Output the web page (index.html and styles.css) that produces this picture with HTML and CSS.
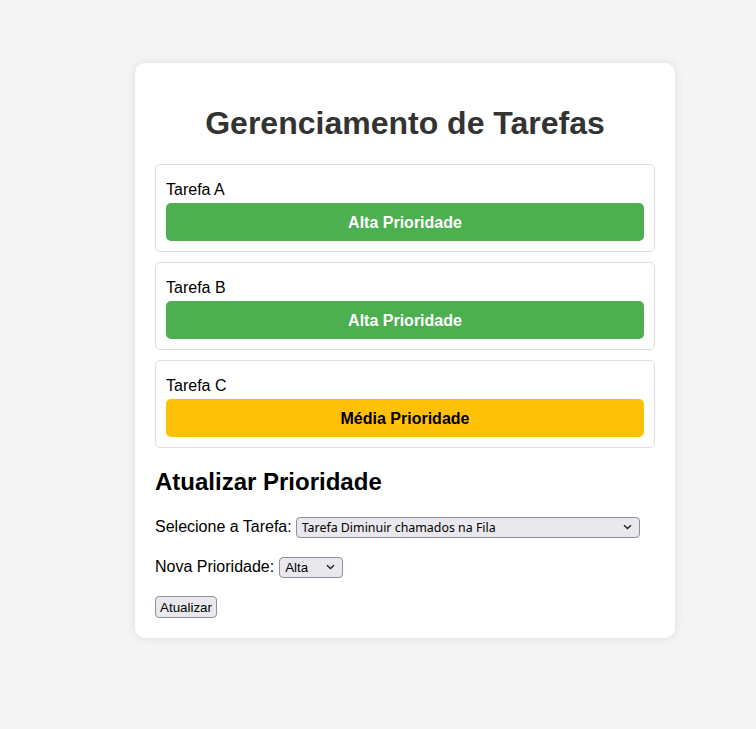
FILE: index.html
```html
<!DOCTYPE html>
<html lang="pt">
<head>
<meta charset="utf-8">
<title>Gerenciamento de Tarefas</title>
<link rel="stylesheet" href="styles.css">
</head>
<body>
<div class="container">
  <h1 class="title">Gerenciamento de Tarefas</h1>
  <div class="task">
    <div class="task-name">Tarefa A</div>
    <div class="priority high">Alta Prioridade</div>
  </div>
  <div class="task">
    <div class="task-name">Tarefa B</div>
    <div class="priority high">Alta Prioridade</div>
  </div>
  <div class="task">
    <div class="task-name">Tarefa C</div>
    <div class="priority medium">Média Prioridade</div>
  </div>
  <h2 class="subtitle">Atualizar Prioridade</h2>
  <div class="row">
    <label for="task-select">Selecione a Tarefa:</label>
    <span class="select-wrap">
      <select id="task-select" class="control select select-task">
        <option>Tarefa Diminuir chamados na Fila</option>
      </select>
      <svg class="chevron" width="9" height="6" viewBox="0 0 9 6"><path d="M1 1.2 L4.5 4.6 L8 1.2" fill="none" stroke="#222" stroke-width="1.4"/></svg>
    </span>
  </div>
  <div class="row row-gap">
    <label for="prio-select">Nova Prioridade:</label>
    <span class="select-wrap">
      <select id="prio-select" class="control select select-prio">
        <option>Alta</option>
        <option>Média</option>
        <option>Baixa</option>
      </select>
      <svg class="chevron" width="9" height="6" viewBox="0 0 9 6"><path d="M1 1.2 L4.5 4.6 L8 1.2" fill="none" stroke="#222" stroke-width="1.4"/></svg>
    </span>
  </div>
  <button class="control btn">Atualizar</button>
</div>
</body>
</html>
```
FILE: styles.css
```css
html, body {
  margin: 0;
  padding: 0;
}
body {
  background: #f4f4f4;
  font-family: "Liberation Sans", Arial, sans-serif;
  font-size: 16px;
  color: #000;
  min-height: 729px;
}
.container {
  width: 500px;
  margin: 63px 0 0 135px;
  padding: 20px;
  background: #fff;
  border-radius: 10px;
  box-shadow: 0 0 10px rgba(0, 0, 0, 0.1);
}
.title {
  margin: 22px 0 22px;
  text-align: center;
  font-size: 32px;
  line-height: 37px;
  font-weight: bold;
  color: #333;
}
.task {
  border: 1px solid #ddd;
  border-radius: 5px;
  padding: 10px;
  margin-bottom: 10px;
}
.task-name {
  line-height: 18px;
  margin: 5px 0;
  padding-top: 1px;
  height: 17px;
}
.priority {
  border-radius: 5px;
  padding: 11px 10px 9px;
  line-height: 18px;
  text-align: center;
  font-weight: bold;
}
.high {
  background: #4caf50;
  color: #fff;
}
.medium {
  background: #ffc107;
  color: #000;
}
.subtitle {
  margin: 20px 0;
  font-size: 24px;
  line-height: 28px;
  font-weight: bold;
}
.row {
  display: flex;
  align-items: center;
  gap: 4px;
  height: 22px;
  margin-bottom: 18px;
}
.row-gap {
  gap: 5px;
}
.select-wrap {
  position: relative;
  display: inline-flex;
}
.control {
  font-family: "Liberation Sans", Arial, sans-serif;
  font-size: 13.33px;
  box-sizing: border-box;
  border: 1px solid #8f8f9d;
  border-radius: 4px;
  background-color: #e9e9ed;
  color: #000;
  margin: 0;
}
.select {
  appearance: none;
  -webkit-appearance: none;
  height: 21px;
  padding: 0 20px 0 5px;
}
.chevron {
  position: absolute;
  right: 8px;
  top: 7px;
  pointer-events: none;
}
.select-task {
  width: 344px;
  font-family: "Noto Sans", "Open Sans", sans-serif;
  font-size: 12.4px;
}
.select-prio {
  width: 64px;
}
.btn {
  display: block;
  height: 22px;
  width: 62px;
  padding: 0 2px;
  text-align: center;
}
```
